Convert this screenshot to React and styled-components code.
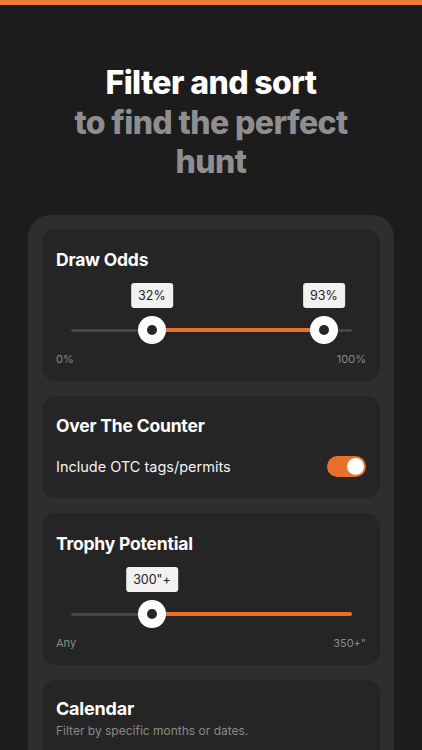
import React from 'react';
import styled, { createGlobalStyle } from 'styled-components';

const GlobalStyle = createGlobalStyle`
  html, body {
    margin: 0;
    padding: 0;
    background: #1c1c1c;
  }
  body {
    font-family: Inter, "Liberation Sans", sans-serif;
    -webkit-font-smoothing: antialiased;
  }
`;

const Page = styled.div`
  height: 750px;
  overflow: hidden;
  background: #1c1c1c;
  display: flex;
  flex-direction: column;
`;

const TopBar = styled.div`
  height: 5px;
  flex-shrink: 0;
  background: #ef7b3b;
`;

const Hero = styled.h1`
  margin: 0;
  padding: 58px 20px 0;
  text-align: center;
  font-size: 32px;
  line-height: 39.5px;
  font-weight: 800;
  letter-spacing: -0.6px;
  color: #ffffff;

  span {
    display: block;
    color: #8e8e90;
  }
`;

const Panel = styled.div`
  flex: 1;
  margin: 33px 28px 0;
  padding: 14px 14px 0;
  background: #2e2e2e;
  border-radius: 22px 22px 0 0;
  display: flex;
  flex-direction: column;
  gap: 15px;
`;

const Card = styled.div`
  flex: ${p => (p.$grow ? 1 : 'none')};
  background: #252525;
  border-radius: ${p => (p.$grow ? '14px 14px 0 0' : '14px')};
  padding: ${p => p.$pad || '20px 14px 15px'};
`;

const Title = styled.div`
  font-size: ${p => p.$size || 17.5}px;
  line-height: 22px;
  font-weight: 700;
  color: #ffffff;
  letter-spacing: -0.2px;
`;

const Sub = styled.div`
  margin-top: 3px;
  font-size: 12px;
  color: #8a8a8a;
`;

const SliderArea = styled.div`
  position: relative;
  height: 61px;
  margin: 12px 14px 0 15px;
`;

const Track = styled.div`
  position: absolute;
  left: 0;
  right: 0;
  top: 46px;
  height: 3px;
  border-radius: 2px;
  background: #464646;
`;

const Fill = styled.div`
  position: absolute;
  top: 45px;
  height: 4px;
  border-radius: 2px;
  background: #e8702a;
`;

const Thumb = styled.div`
  position: absolute;
  top: 33px;
  width: 28px;
  height: 28px;
  margin-left: -14px;
  border-radius: 50%;
  background: #ffffff;
  display: flex;
  align-items: center;
  justify-content: center;

  &::after {
    content: '';
    width: 10px;
    height: 10px;
    border-radius: 50%;
    background: #262626;
  }
`;

const Bubble = styled.div`
  position: absolute;
  top: 0;
  transform: translateX(-50%);
  height: 25px;
  padding: 0 7px;
  border-radius: 3px;
  background: #f1f1f1;
  color: #222222;
  font-size: 12.5px;
  line-height: 25px;
  white-space: nowrap;
`;

const Scale = styled.div`
  display: flex;
  justify-content: space-between;
  margin-top: 8px;
  font-size: 11px;
  line-height: 14px;
  color: #8a8a8a;
`;

const Row = styled.div`
  margin-top: 19px;
  display: flex;
  align-items: center;
  justify-content: space-between;
  font-size: 14.5px;
  color: #f2f2f2;
`;

const Toggle = styled.div`
  width: 39px;
  height: 21px;
  border-radius: 11px;
  background: ${p => (p.$on ? '#e8702a' : '#555')};
  display: flex;
  align-items: center;
  justify-content: ${p => (p.$on ? 'flex-end' : 'flex-start')};
  padding: 0 2px;
  box-sizing: border-box;

  &::after {
    content: '';
    width: 17px;
    height: 17px;
    border-radius: 50%;
    background: #ffffff;
  }
`;

function Slider({ values, min, max }) {
  const from = values[0].at;
  const to = values.length > 1 ? values[1].at : 1;
  return (
    <>
      <SliderArea>
        <Track />
        <Fill style={{ left: `${from * 100}%`, width: `${(to - from) * 100}%` }} />
        {values.map(v => (
          <React.Fragment key={v.label}>
            <Bubble style={{ left: `${v.at * 100}%` }}>{v.label}</Bubble>
            <Thumb style={{ left: `${v.at * 100}%` }} />
          </React.Fragment>
        ))}
      </SliderArea>
      <Scale>
        <span>{min}</span>
        <span>{max}</span>
      </Scale>
    </>
  );
}

export default function App() {
  return (
    <Page>
      <GlobalStyle />
      <TopBar />
      <Hero>
        Filter and sort
        <span>to find the perfect</span>
        <span>hunt</span>
      </Hero>
      <Panel>
        <Card>
          <Title>Draw Odds</Title>
          <Slider
            values={[{ label: '32%', at: 0.288 }, { label: '93%', at: 0.9 }]}
            min="0%"
            max="100%"
          />
        </Card>
        <Card $pad="19px 14px 21px">
          <Title>Over The Counter</Title>
          <Row>
            Include OTC tags/permits
            <Toggle $on />
          </Row>
        </Card>
        <Card>
          <Title>Trophy Potential</Title>
          <Slider values={[{ label: '300"+', at: 0.288 }]} min="Any" max={'350+"'} />
        </Card>
        <Card $grow $pad="18px 14px 0">
          <Title $size={18}>Calendar</Title>
          <Sub>Filter by specific months or dates.</Sub>
        </Card>
      </Panel>
    </Page>
  );
}
